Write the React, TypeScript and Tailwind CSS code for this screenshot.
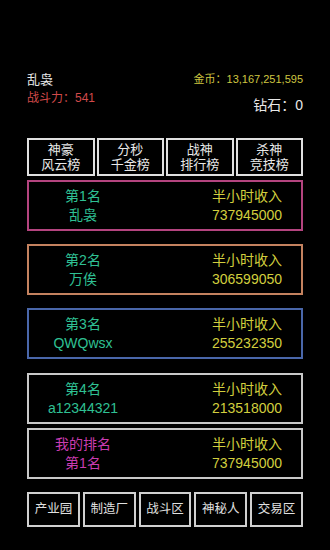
import React from "react"

type Rank = {
  title: string
  name: string
  income: string
  border: string
  titleColor: string
  nameColor: string
  gap: string
}

const TABS = [
  ["神豪", "风云榜"],
  ["分秒", "千金榜"],
  ["战神", "排行榜"],
  ["杀神", "竞技榜"],
]

const RANKS: Rank[] = [
  { title: "第1名", name: "乱袅", income: "737945000", border: "border-[#b4447f]", titleColor: "text-[#2fc094]", nameColor: "text-[#2fc094]", gap: "mt-[4px]" },
  { title: "第2名", name: "万俟", income: "306599050", border: "border-[#c4825f]", titleColor: "text-[#2fc094]", nameColor: "text-[#2fc094]", gap: "mt-[13px]" },
  { title: "第3名", name: "QWQwsx", income: "255232350", border: "border-[#4a67aa]", titleColor: "text-[#2fc094]", nameColor: "text-[#2fc094]", gap: "mt-[13px]" },
  { title: "第4名", name: "a12344321", income: "213518000", border: "border-[#c8c8c8]", titleColor: "text-[#2fc094]", nameColor: "text-[#2fc094]", gap: "mt-[14px]" },
  { title: "我的排名", name: "第1名", income: "737945000", border: "border-[#c8c8c8]", titleColor: "text-[#c93cb0]", nameColor: "text-[#c93cb0]", gap: "mt-[4px]" },
]

const BUTTONS = ["产业园", "制造厂", "战斗区", "神秘人", "交易区"]

export default function App() {
  return (
    <div
      className="w-[330px] h-[550px] bg-black overflow-hidden"
      style={{ fontFamily: '"Liberation Sans", "Noto Sans CJK SC", sans-serif' }}
    >
      <div className="px-[27px] pt-[71px] w-[330px]">
        {/* header */}
        <div className="flex justify-between">
          <div>
            <div className="text-[13px] leading-[18px] text-[#e8e8e8]">乱袅</div>
            <div className="text-[12px] leading-[18px] text-[#d24a4a]">战斗力：541</div>
          </div>
          <div className="text-right">
            <div className="text-[11px] leading-[16px] text-[#cfc640]">金币：13,167,251,595</div>
            <div className="mt-[8px] text-[14px] leading-[20px] text-[#e8e8e8]">钻石：0</div>
          </div>
        </div>

        {/* tabs */}
        <div className="mt-[23px] grid grid-cols-4 gap-[2px]">
          {TABS.map((t) => (
            <div
              key={t[0]}
              className="h-[38px] border-2 border-[#e0e0e0] flex flex-col items-center justify-center text-[13px] leading-[15px] text-[#e8e8e8]"
            >
              <div>{t[0]}</div>
              <div>{t[1]}</div>
            </div>
          ))}
        </div>

        {/* rank cards */}
        {RANKS.map((r) => (
          <div
            key={r.title + r.income + r.name}
            className={`${r.gap} h-[51px] border-2 ${r.border} flex items-center justify-between text-[14px] leading-[19px]`}
          >
            <div className="w-[108px] text-center">
              <div className={r.titleColor}>{r.title}</div>
              <div className={r.nameColor}>{r.name}</div>
            </div>
            <div className="w-[108px] text-center text-[#d2cf3e]">
              <div>半小时收入</div>
              <div>{r.income}</div>
            </div>
          </div>
        ))}

        {/* bottom buttons */}
        <div className="mt-[13px] grid grid-cols-5 gap-[3px]">
          {BUTTONS.map((b) => (
            <div
              key={b}
              className="h-[35px] border-2 border-[#d0d0d0] flex items-center justify-center text-[12.5px] text-[#e0e0e0]"
            >
              {b}
            </div>
          ))}
        </div>
      </div>
    </div>
  )
}
